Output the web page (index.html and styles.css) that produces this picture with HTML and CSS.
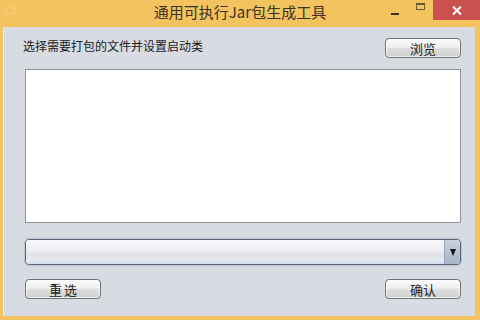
FILE: index.html
```html
<!DOCTYPE html>
<html lang="zh-CN">
<head>
<meta charset="utf-8">
<title>通用可执行Jar包生成工具</title>
<link rel="stylesheet" href="styles.css">
</head>
<body>
<div class="window">
  <div class="titlebar">
    <div class="tb-left">
      <svg class="app-icon" width="14" height="12" viewBox="0 0 14 12">
        <path d="M2 5 h8 v3 a3 3 0 0 1 -3 3 h-2 a3 3 0 0 1 -3 -3 z" fill="none" stroke="#f7d68c" stroke-width="1.2"/>
        <path d="M10 6 h1.5 a1.3 1.3 0 0 1 0 2.6 h-1.5" fill="none" stroke="#f7d68c" stroke-width="1"/>
        <path d="M5 1 q1 1.5 0 3 M7.5 1 q1 1.5 0 3" fill="none" stroke="#f7d68c" stroke-width="1"/>
      </svg>
    </div>
    <div class="title">通用可执行Jar包生成工具</div>
    <div class="controls">
      <div class="ctl ctl-min"><span class="min-bar"></span></div>
      <div class="ctl ctl-max"><span class="max-box"></span></div>
      <div class="ctl ctl-close">
        <svg width="10" height="9" viewBox="0 0 10 9"><path d="M1 0.5 L9 8.5 M9 0.5 L1 8.5" stroke="#ffffff" stroke-width="2"/></svg>
      </div>
    </div>
  </div>
  <div class="frame">
    <div class="content">
      <div class="row-top">
        <span class="label">选择需要打包的文件并设置启动类</span>
        <button class="btn">浏览</button>
      </div>
      <div class="textarea"></div>
      <div class="combo">
        <div class="combo-field"></div>
        <div class="combo-arrow"><span class="tri"></span></div>
      </div>
      <div class="row-bottom">
        <button class="btn btn-spaced">重选</button>
        <button class="btn">确认</button>
      </div>
    </div>
  </div>
</div>
</body>
</html>
```

FILE: styles.css
```css
* { box-sizing: border-box; }
html, body {
  margin: 0;
  padding: 0;
}
body {
  width: 480px;
  height: 320px;
  overflow: hidden;
  background: #f2c562;
  font-family: "Noto Sans CJK SC", "Noto Sans", sans-serif;
}
.window {
  width: 480px;
  height: 320px;
  display: flex;
  flex-direction: column;
  background: #f2c562;
}
.titlebar {
  height: 27px;
  flex: 0 0 27px;
  display: grid;
  grid-template-columns: 1fr auto 1fr;
  align-items: start;
  background: #f2c35e;
}
.tb-left {
  padding: 3px 0 0 4px;
}
.app-icon { display: block; opacity: 0.8; }
.title {
  font-size: 15px;
  line-height: 24px;
  color: #3a3325;
  white-space: nowrap;
}
.controls {
  display: flex;
  justify-content: flex-end;
}
.ctl {
  height: 20px;
  display: flex;
  align-items: center;
  justify-content: center;
}
.ctl-min { width: 26px; }
.ctl-max { width: 25px; }
.ctl-close {
  width: 47px;
  background: #c9524e;
}
.min-bar {
  width: 8px;
  height: 2px;
  background: #3a3325;
  margin-top: 7px;
}
.max-box {
  width: 9px;
  height: 7px;
  border: 1px solid #6b5a35;
  border-top-width: 2px;
  margin-top: -7px;
}
.frame {
  flex: 1;
  padding: 0 5px 4px 3px;
}
.content {
  height: 100%;
  background: #d8dbe2;
  border-left: 1px solid #eceef2;
  padding: 11px 14px 0 21px;
  display: flex;
  flex-direction: column;
}
.row-top {
  display: flex;
  justify-content: space-between;
  align-items: center;
  height: 20px;
}
.label {
  font-size: 12px;
  color: #1a1a1a;
  margin-left: -2px;
  margin-top: -5px;
}
.btn {
  width: 76px;
  height: 20px;
  padding: 0;
  border: 1px solid #6f737a;
  border-radius: 4px;
  background: linear-gradient(#fbfbfb 0%, #f0f0f0 45%, #dcdcdc 55%, #d0d0d0 100%);
  font-family: "Noto Sans CJK SC", "Noto Sans", sans-serif;
  font-size: 13px;
  line-height: 17px;
  color: #222;
  box-shadow: inset 0 0 0 1px rgba(255,255,255,0.7);
}
.btn-spaced { letter-spacing: 2px; text-indent: 2px; }
.textarea {
  margin-top: 11px;
  height: 154px;
  background: #ffffff;
  border: 1px solid #8d929b;
}
.combo {
  margin-top: 16px;
  height: 26px;
  display: flex;
  border: 1px solid #5a6678;
  border-radius: 4px;
  overflow: hidden;
  box-shadow: 0 0 0 1px rgba(150,160,175,0.35);
}
.combo-field {
  flex: 1;
  background: linear-gradient(#f7f8fa 0%, #eceef1 45%, #e1e3e7 60%, #e6ebf2 85%, #cfdcef 100%);
}
.combo-arrow {
  width: 16px;
  border-left: 1px solid #9aa6b8;
  background: linear-gradient(#c9d2de 0%, #b7c2d1 50%, #a9b6c8 100%);
  display: flex;
  align-items: center;
  justify-content: center;
}
.tri {
  width: 0;
  height: 0;
  border-left: 3.5px solid transparent;
  border-right: 3.5px solid transparent;
  border-top: 7px solid #111;
}
.row-bottom {
  margin-top: 14px;
  display: flex;
  justify-content: space-between;
}
```
